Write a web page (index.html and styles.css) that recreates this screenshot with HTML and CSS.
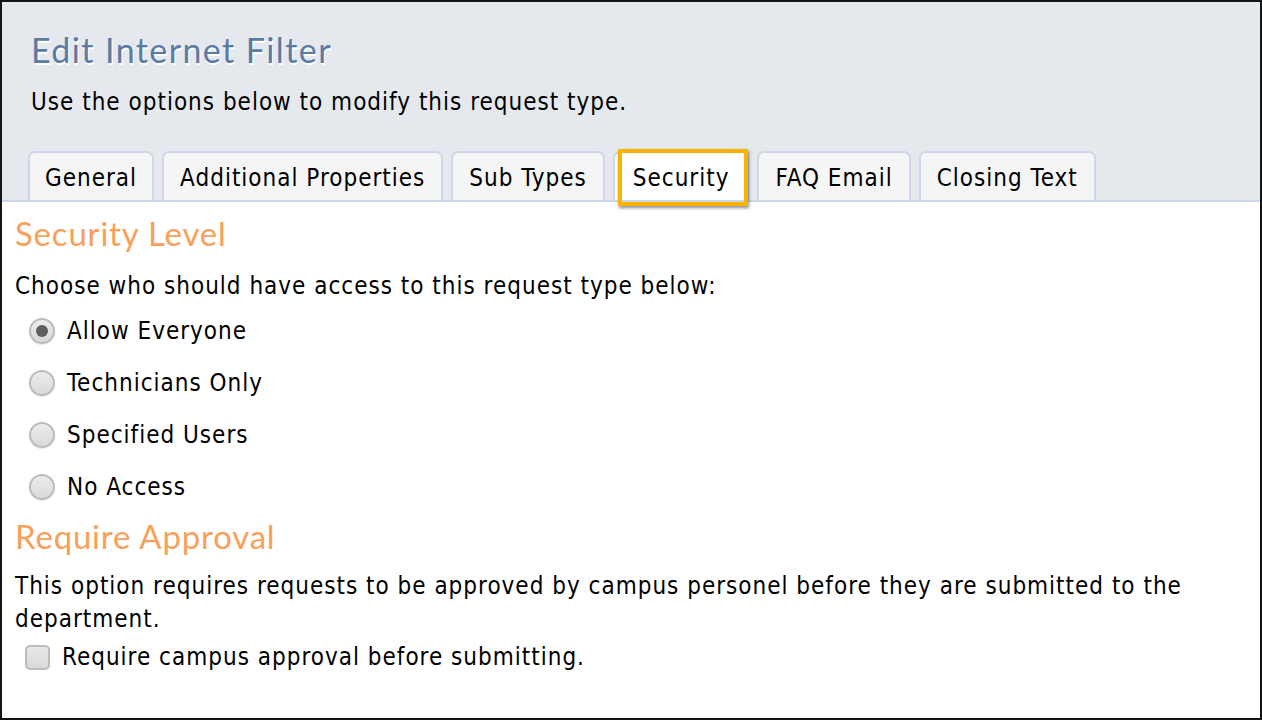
FILE: index.html
```html
<!DOCTYPE html>
<html>
<head>
<meta charset="utf-8">
<link rel="stylesheet" href="styles.css">
</head>
<body>
<div class="frame">
  <div class="header">
    <h1 class="title">Edit Internet Filter</h1>
    <p class="subtitle">Use the options below to modify this request type.</p>
    <div class="tabs">
      <div class="tab">General</div>
      <div class="tab">Additional Properties</div>
      <div class="tab">Sub Types</div>
      <div class="tab active">Security</div>
      <div class="tab">FAQ Email</div>
      <div class="tab">Closing Text</div>
    </div>
  </div>
  <div class="content">
    <h2 class="section">Security Level</h2>
    <p class="text">Choose who should have access to this request type below:</p>
    <div class="options">
      <label class="opt"><span class="radio checked"></span>Allow Everyone</label>
      <label class="opt"><span class="radio"></span>Technicians Only</label>
      <label class="opt"><span class="radio"></span>Specified Users</label>
      <label class="opt"><span class="radio"></span>No Access</label>
    </div>
    <h2 class="section section2">Require Approval</h2>
    <p class="text para">This option requires requests to be approved by campus personel before they are submitted to the department.</p>
    <label class="check"><span class="box"></span>Require campus approval before submitting.</label>
  </div>
</div>
</body>
</html>
```
FILE: styles.css
```css
html, body { margin: 0; padding: 0; }
body {
  font-family: "DejaVu Sans", sans-serif;
  font-stretch: condensed;
  font-size: 24px;
  letter-spacing: 1px;
  color: #000;
  background: #fff;
}
.frame {
  width: 1262px;
  height: 720px;
  box-sizing: border-box;
  border: 2px solid #141414;
  background: #fff;
  overflow: hidden;
}
.header {
  background: #e5e9ee;
  padding: 28px 0 0 26px;
  border-bottom: 2px solid #d0d6e9;
}
.title {
  margin: 0 0 0 3px;
  font-family: "Lato", sans-serif;
  font-weight: 400;
  font-size: 34px;
  letter-spacing: 1.4px;
  line-height: 40px;
  color: #5b7ba3;
  text-shadow: 1px 2px 0 #fff;
}
.subtitle {
  margin: 18px 0 0 3px;
  line-height: 28px;
}
.tabs {
  display: flex;
  gap: 8px;
  margin-top: 35px;
}
.tab {
  height: 49px;
  box-sizing: border-box;
  padding: 0 16px;
  border: 2px solid #d0d6e9;
  border-bottom: none;
  border-radius: 7px 7px 0 0;
  background: #f5f5f5;
  line-height: 50px;
}
.tab:first-child { padding: 0 15px; }
.tab.active {
  background: #fff;
  position: relative;
  padding: 0 18px;
}
.tab.active::after {
  content: "";
  position: absolute;
  left: 3px; right: -1px; top: -4px; bottom: -6px;
  border: 4px solid #f9b400;
  box-shadow: 1px 2px 3px rgba(0,0,0,0.45);
}
.content {
  padding: 11px 0 0 13px;
}
.section {
  margin: 0;
  font-family: "Lato", sans-serif;
  font-weight: 400;
  font-size: 33px;
  letter-spacing: 0.8px;
  line-height: 40px;
  color: #f8a05a;
}
.text {
  margin: 17px 0 0;
  line-height: 33px;
}
.options {
  display: flex;
  flex-direction: column;
  margin-top: 2px;
}
.opt {
  display: flex;
  align-items: center;
  height: 52px;
  padding-left: 14px;
}
.radio {
  width: 22px;
  height: 22px;
  border-radius: 50%;
  border: 2px solid #bcbcbc;
  background: linear-gradient(#ececec, #d9d9d9);
  margin-right: 12px;
  position: relative;
  box-shadow: 0 1px 1px rgba(0,0,0,0.1);
}
.radio.checked::after {
  content: "";
  position: absolute;
  left: 5px; top: 5px;
  width: 12px; height: 12px;
  border-radius: 50%;
  background: #5e5e5e;
}
.section2 { margin-top: 3px; }
.para { margin-top: 14px; }
.check {
  display: flex;
  align-items: center;
  height: 42px;
  padding-left: 10px;
}
.box {
  width: 21px;
  height: 21px;
  border: 2px solid #bcbcbc;
  border-radius: 5px;
  background: linear-gradient(#e8e8e8, #d9d9d9);
  margin-right: 12px;
}
```
